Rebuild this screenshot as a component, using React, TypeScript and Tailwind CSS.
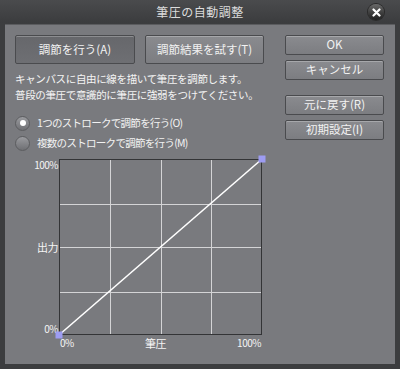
import React from "react";

const FONT = { fontFamily: '"Noto Sans CJK JP", "Noto Sans", sans-serif' };

function Btn({ label, pressed, className = "" }: { label: string; pressed?: boolean; className?: string }) {
  return (
    <button
      className={`flex items-center justify-center rounded-[2px] border border-[#4a4b4e] text-[11.5px] text-[#f2f2f2] shadow-[inset_0_1px_0_rgba(255,255,255,0.25)] ${
        pressed ? "bg-gradient-to-b from-[#66676b] to-[#6e6f73]" : "bg-gradient-to-b from-[#8a8b8f] to-[#7c7d81]"
      } ${className}`}
    >
      {label}
    </button>
  );
}

function Radio({ label, checked }: { label: string; checked?: boolean }) {
  return (
    <div className="flex h-[20px] items-center gap-[7px]">
      <span className="flex h-[15px] w-[15px] items-center justify-center rounded-full border border-[#5c5d60] bg-gradient-to-b from-[#9a9b9f] to-[#6f7074]">
        {checked && <span className="h-[6px] w-[6px] rounded-full bg-white" />}
      </span>
      <span className="text-[10.5px] tracking-[-0.7px] text-[#f2f2f2]">{label}</span>
    </div>
  );
}

function Chart() {
  const w = 203;
  const h = 176;
  return (
    <svg width={w} height={h} viewBox={`0 0 ${w} ${h}`} className="block overflow-visible">
      {[51, 102, 152].map(x => (
        <line key={x} x1={x + 0.5} y1={0} x2={x + 0.5} y2={h} stroke="#d4d4d6" strokeWidth={1} />
      ))}
      {[45, 88, 133].map(y => (
        <line key={y} x1={0} y1={y + 0.5} x2={w} y2={y + 0.5} stroke="#d4d4d6" strokeWidth={1} />
      ))}
      <rect x={0.5} y={0.5} width={w - 1} height={h - 1} fill="none" stroke="#333436" strokeWidth={1} />
      <line x1={0} y1={h} x2={w} y2={0} stroke="#ffffff" strokeWidth={1.6} />
      <rect x={-3.5} y={h - 3.5} width={7} height={7} fill="#9d9cf2" />
      <rect x={w - 3.5} y={-3.5} width={7} height={7} fill="#9d9cf2" />
    </svg>
  );
}

export default function App() {
  return (
    <div className="flex h-[369px] w-[400px] flex-col bg-[#3c3d3f]" style={FONT}>
      {/* Title bar */}
      <div className="relative flex h-[23px] items-center justify-center bg-gradient-to-b from-[#4a4b4d] to-[#3b3c3e]">
        <span className="text-[12px] tracking-[0.5px] text-[#dcdcdc]">筆圧の自動調整</span>
        <span className="absolute right-[16px] top-[4px] flex h-[16px] w-[16px] items-center justify-center rounded-full bg-gradient-to-b from-[#6a6a6a] to-[#1e1e1e] shadow-[0_0_0_1px_#2a2a2a]">
          <svg width="9" height="9" viewBox="0 0 9 9">
            <path d="M1.5 1.5 L7.5 7.5 M7.5 1.5 L1.5 7.5" stroke="#fff" strokeWidth="2.2" strokeLinecap="round" />
          </svg>
        </span>
      </div>

      {/* Body */}
      <div className="mx-[5px] mb-[5px] mt-[1px] flex flex-1 gap-[21px] border-t border-[#5b5c5f] bg-[#797a7e] pl-[10px] pr-[11px] pt-[10px]">
        {/* Left column */}
        <div className="flex w-[249px] flex-col">
          <div className="flex gap-[10px]">
            <Btn label="調節を行う(A)" pressed className="h-[29px] w-[120px]" />
            <Btn label="調節結果を試す(T)" className="h-[29px] w-[119px]" />
          </div>
          <div className="mt-[7px] text-[10.5px] leading-[16px] tracking-[-0.35px] text-[#f4f4f4]">
            <div className="whitespace-nowrap">キャンバスに自由に線を描いて筆圧を調節します。</div>
            <div className="whitespace-nowrap">普段の筆圧で意識的に筆圧に強弱をつけてください。</div>
          </div>
          <div className="mt-[10px] flex flex-col">
            <Radio label="1つのストロークで調節を行う(O)" checked />
            <Radio label="複数のストロークで調節を行う(M)" />
          </div>
          <div className="mt-[6px] flex">
            <div className="flex h-[176px] w-[44px] flex-col items-end justify-between pr-[1px] text-[10px] leading-[12px] tracking-[-0.5px] text-[#f4f4f4]">
              <span>100%</span>
              <span className="text-[11px]">出力</span>
              <span>0%</span>
            </div>
            <div className="flex flex-col">
              <Chart />
              <div className="mt-[2px] flex w-[203px] justify-between px-[1px] text-[10px] leading-[12px] tracking-[-0.5px] text-[#f4f4f4]">
                <span>0%</span>
                <span className="text-[11px]">筆圧</span>
                <span>100%</span>
              </div>
            </div>
          </div>
        </div>

        {/* Right column */}
        <div className="flex w-[99px] flex-col">
          <Btn label="OK" className="h-[20px] w-full" />
          <Btn label="キャンセル" className="mt-[5px] h-[20px] w-full" />
          <Btn label="元に戻す(R)" className="mt-[15px] h-[20px] w-full" />
          <Btn label="初期設定(I)" className="mt-[5px] h-[20px] w-full" />
        </div>
      </div>
    </div>
  );
}
